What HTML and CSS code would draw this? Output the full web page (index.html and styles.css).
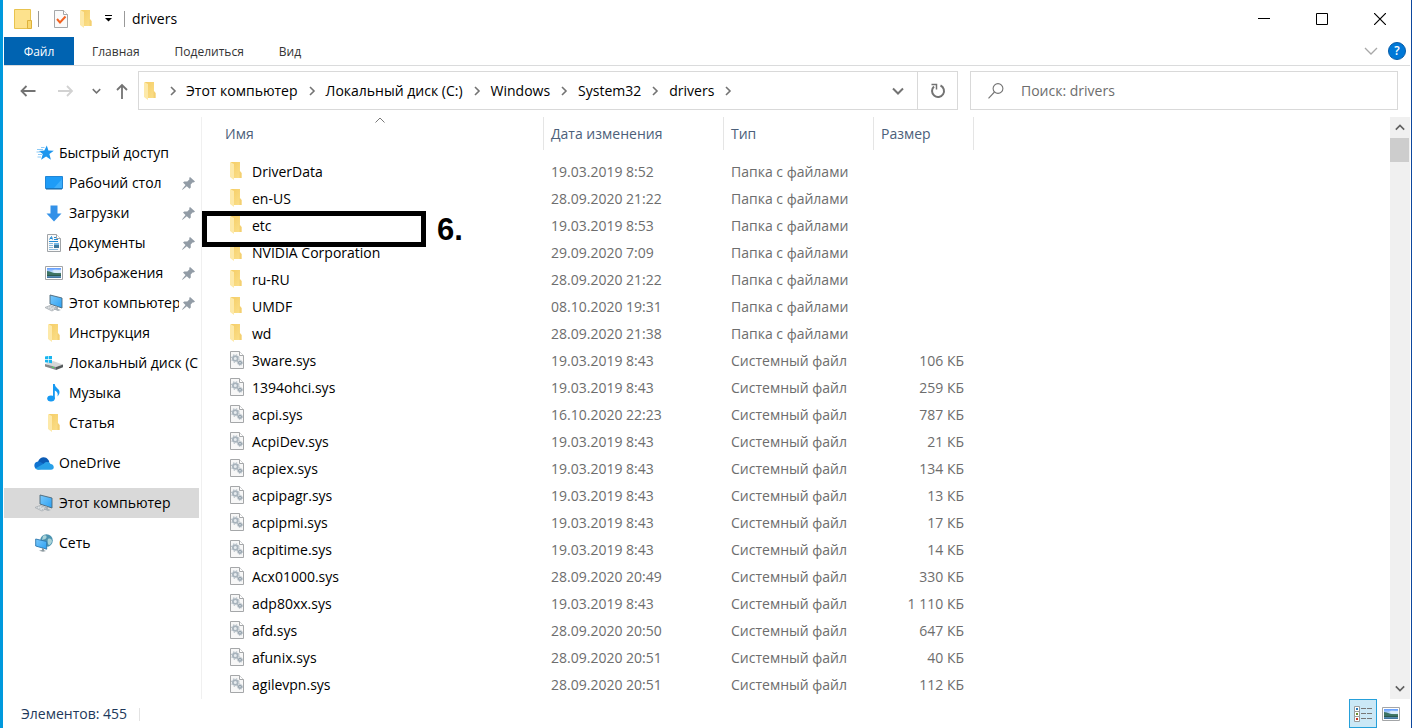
FILE: index.html
```html
<!DOCTYPE html>
<html lang="ru">
<head>
<meta charset="utf-8">
<title>drivers</title>
<link rel="stylesheet" href="styles.css">
</head>
<body>
<svg class="sprite" aria-hidden="true">
  <defs>
    <linearGradient id="gold" x1="0" x2="1" y1="0" y2="1"><stop offset="0" stop-color="#f5cd66"/><stop offset="1" stop-color="#fbe08c"/></linearGradient>
    <linearGradient id="sky" x1="0" x2="0" y1="0" y2="1"><stop offset="0" stop-color="#5f9bff"/><stop offset="0.5" stop-color="#d3ecfb"/><stop offset="0.55" stop-color="#4f7d6a"/><stop offset="0.75" stop-color="#2c5a50"/><stop offset="0.8" stop-color="#5d93b4"/><stop offset="1" stop-color="#3a6d9c"/></linearGradient>
    <linearGradient id="screen" x1="0" x2="1" y1="0" y2="1"><stop offset="0" stop-color="#7cc9fb"/><stop offset="1" stop-color="#2aa0f3"/></linearGradient>
  </defs>
  <symbol id="i-folder" viewBox="0 0 12 18">
    <path d="M1 0h9v9l1.500 2v5H3z" fill="url(#gold)"/>
    <path d="M0 0l4 2v16l-4-3z" fill="#fde9a9"/>
    <path d="M9.500 9l2 2v5h-2z" fill="#f3cf72"/>
  </symbol>
  <symbol id="i-sys" viewBox="0 0 14 18">
    <path d="M.5.5h9l4 4v13H.5z" fill="#f7f7f7" stroke="#a5a7a9"/>
    <path d="M9.500.5v4h4" fill="#fff" stroke="#a5a7a9"/>
    <circle cx="5.300" cy="7.500" r="2.400" fill="#e6ebef" stroke="#a8b3bc" stroke-width="1.800"/>
    <circle cx="5.300" cy="7.500" r="3.800" fill="none" stroke="#b4bec6" stroke-width="1.100" stroke-dasharray="1.500 1.500"/>
    <circle cx="10" cy="11.800" r="1.400" fill="#e6ebef" stroke="#96a3ae" stroke-width="1.400"/>
    <circle cx="10" cy="11.800" r="2.500" fill="none" stroke="#a3afb8" stroke-dasharray="1 1"/>
  </symbol>
  <symbol id="i-star" viewBox="0 0 18 16" preserveAspectRatio="xMaxYMid">
    <path d="M10.800.5l1.600 5 5.400.2-4.400 3.300 1.500 5.700-4.800-3.200-5 3.300 1.700-5.700-4-3.200 5.500-.4z" fill="#1d96ee"/>
    <path d="M5 2.500h3.500M1 4.500h6M.5 7h4M2 9.500h4M1.500 12h3.500" stroke="#8ccaf6"/>
  </symbol>
  <symbol id="i-desktop" viewBox="0 0 18 14">
    <path d="M.5.5h17v12H.5z" fill="#1e9cf7" stroke="#2186d6"/>
    <path d="M9 12L17 3v9z" fill="#3daefb"/><path d="M1 13h16" stroke="#14639f"/>
  </symbol>
  <symbol id="i-down" viewBox="0 0 16 17"><path d="M4.500.5h7v8h4L8 16.500.5 8.500h4z" fill="#3391e8"/></symbol>
  <symbol id="i-doc" viewBox="0 0 14 18">
    <path d="M.5.5h9l4 4v13H.5z" fill="#fafafa" stroke="#9fa3a7"/><path d="M9.500.5v4h4" fill="#fff" stroke="#9fa3a7"/>
    <path d="M2.500 5.500l2-3 1 3M3 4.500h2M7 3.500h2M7 5.500h4M2 7.500h9" fill="none" stroke="#228ad2"/>
    <path d="M2 9.500h4M2 11.500h4M2 13.500h4M2 15.500h9" stroke="#87b9dc"/><path d="M7 9h5v5H7z" fill="#3e789c"/><path d="M7 9h5v2H7z" fill="#74b7e4"/>
  </symbol>
  <symbol id="i-pic" viewBox="0 0 18 14">
    <path d="M.5.5h17v13H.5z" fill="#fff" stroke="#a3a5a7"/><path d="M2 2h14v10H2z" fill="url(#sky)"/>
    <path d="M2 5c4 0 6 3 14 3v1H2z" fill="#3c7465"/><path d="M7 5c2-2 5-1 9-1v2c-3 1-6 1-9-1z" fill="#eff8fc" opacity=".7"/>
  </symbol>
  <symbol id="i-pc" viewBox="0 0 20 18">
    <path d="M6 1l12 3v10L6 10z" fill="url(#screen)" stroke="#4b6678" stroke-width=".9"/>
    <path d="M11 12v2l-2 1 5 2 3-1-3-1v-2z" fill="#a8b1b7"/>
    <path d="M1 13.500l5-2 7 2.500-5 3z" fill="#e3e6e8" stroke="#a5abb0" stroke-width=".8"/>
    <path d="M3 13.700l6 2M5 12.700l6 2" stroke="#a5abb0" stroke-width=".8" stroke-dasharray="1 .8"/>
  </symbol>
  <symbol id="i-disk" viewBox="0 0 18 14">
    <path d="M0 8l8-3 10 3.500-7 2.500z" fill="#d5d7d8"/><path d="M0 8l11 3v3L0 10.500z" fill="#85898c"/><path d="M11 11l7-2.500v2.700L11 14z" fill="#55595b"/><path d="M7 11l2 .7" stroke="#4ae15b"/>
    <path d="M0 .5l3-.4v3H0zM3.600 0L7-.4v3.500H3.600zM0 3.700h3v3L0 6.300zM3.600 3.700H7v3.500l-3.400-.4z" fill="#18b5ef"/>
  </symbol>
  <symbol id="i-note" viewBox="0 0 14 18">
    <ellipse cx="4" cy="14.500" rx="3.800" ry="3" fill="#1699f2"/><path d="M6 0h1.800c.2 4 4.700 4.500 4.700 8 0 2-.9 3.300-2 4.500.8-3.300-.2-5-2.700-6V15H6z" fill="#1699f2"/>
  </symbol>
  <symbol id="i-cloud" viewBox="0 0 20 13">
    <path d="M4 5C5 .5 11-1.500 14 2.500c1 1.200 1.200 2 1.300 3L8 8z" fill="#0b5bb5"/>
    <path d="M4.200 12.500C-.8 12-1 5 4 4.600c2 0 3 .8 5 2L14 11z" fill="#1073d0"/>
    <path d="M1.300 11.500L10 6.500c2-2.500 6-1.500 6.500.5 4 .3 4.500 5.500.5 5.700H4c-1.300 0-2-.5-2.700-1.200z" fill="#28a0e8"/>
  </symbol>
  <symbol id="i-net" viewBox="0 0 18 18">
    <circle cx="11.500" cy="6.500" r="6.300" fill="#4c93b0"/><path d="M8 2c2-1.500 4-.5 3.500 1.500S9 5 7 6zM13 5c2-1 4 0 4 2s-2 4-3 4-2-4-1-6z" fill="#a9d3d8"/>
    <path d="M.7 5l11 2.500v7.700L.7 12z" fill="url(#screen)" stroke="#2c77ae" stroke-width=".9"/><path d="M7 14v2l-3 .7 4 1.100 3-.9-2-.7V14.500z" fill="#8c999f"/>
  </symbol>
  <symbol id="i-pin" viewBox="0 0 13 13"><path d="M8 0l5 4.500-1.300.9-.8-.2-2.200 2.300.1 3-1.300 1.200L4.800 9.200.6 12.800 0 12.500l3.500-4.600L1 5.600l1.300-1.200 3 .2 2.200-2.400L7.200 1z" fill="#929ca6"/></symbol>
  <symbol id="i-chev" viewBox="0 0 10 10"><path d="M3 1l4 4-4 4" fill="none" stroke="#737373" stroke-width="1.600"/></symbol>
  <symbol id="i-drop" viewBox="0 0 12 8"><path d="M1 1.500l5 5 5-5" fill="none" stroke="currentColor" stroke-width="2"/></symbol>
</svg>

<div class="window">
  <header class="titlebar">
    <svg class="app-icon" width="18" height="20" viewBox="0 0 18 20"><path d="M.5.5h16v19H.5z" fill="#fde28d" stroke="#e8c34f"/><path d="M13.500 19.500v-8h4v8z" fill="#f9d871" stroke="#ddb13c"/></svg>
    <span class="bar"></span>
    <button class="quick" aria-label="Свойства"><svg width="14" height="18" viewBox="0 0 14 18"><path d="M.5.5h9l4 4v13H.5z" fill="#fafafa" stroke="#a5a7a9"/><path d="M9.500.5v4h4" fill="#fff" stroke="#a5a7a9"/><path d="M3 9l3 3.500L11.500 6.500" fill="none" stroke="#f26322" stroke-width="2"/></svg></button>
    <button class="quick" aria-label="Новая папка"><svg width="12" height="18"><use href="#i-folder"/></svg></button>
    <button class="quick customize" aria-label="Настройка панели"><svg width="7" height="7" viewBox="0 0 7 7"><path d="M0 .5h7" stroke="#000"/><path d="M0 3h7L3.500 6.500z"/></svg></button>
    <span class="bar"></span>
    <h1 class="title">drivers</h1>
    <button class="win-btn" aria-label="Свернуть"><svg width="12" height="12"><path d="M0 5.500h12" stroke="#000"/></svg></button>
    <button class="win-btn" aria-label="Развернуть"><svg width="12" height="12"><path d="M.5.5h11v11H.5z" fill="none" stroke="#000"/></svg></button>
    <button class="win-btn" aria-label="Закрыть"><svg width="12" height="12"><path d="M0 0l12 12M12 0L0 12" stroke="#000" stroke-width="1.200"/></svg></button>
  </header>

  <nav class="ribbon">
    <button class="tab tab-file">Файл</button>
    <button class="tab">Главная</button>
    <button class="tab">Поделиться</button>
    <button class="tab">Вид</button>
    <button class="expand" aria-label="Развернуть ленту"><svg width="14" height="8" viewBox="0 0 14 8"><path d="M1 1l6 6 6-6" fill="none" stroke="#a8a8a8" stroke-width="1.300"/></svg></button>
    <button class="help" aria-label="Справка">?</button>
  </nav>

  <div class="navbar">
    <div class="arrows">
      <button aria-label="Назад"><svg width="16" height="12" viewBox="0 0 16 12"><path d="M15.500 6H2M6.500 1L1.500 6l5 5" fill="none" stroke="#737373" stroke-width="1.800"/></svg></button>
      <button aria-label="Вперёд"><svg width="16" height="12" viewBox="0 0 16 12"><path d="M0 6h14M9 1l5 5-5 5" fill="none" stroke="#d2d2d2" stroke-width="1.800"/></svg></button>
      <button class="recent" aria-label="Последние расположения"><svg width="9" height="6"><use href="#i-drop"/></svg></button>
      <button class="up" aria-label="Вверх"><svg width="12" height="16" viewBox="0 0 12 16"><path d="M6 16V2M1 7l5-5 5 5" fill="none" stroke="#737373" stroke-width="1.800"/></svg></button>
    </div>
    <div class="address">
      <svg width="12" height="18"><use href="#i-folder"/></svg>
      <svg class="sep" width="10" height="10"><use href="#i-chev"/></svg><button>Этот компьютер</button>
      <svg class="sep" width="10" height="10"><use href="#i-chev"/></svg><button>Локальный диск (C:)</button>
      <svg class="sep" width="10" height="10"><use href="#i-chev"/></svg><button>Windows</button>
      <svg class="sep" width="10" height="10"><use href="#i-chev"/></svg><button>System32</button>
      <svg class="sep" width="10" height="10"><use href="#i-chev"/></svg><button>drivers</button>
      <svg class="sep" width="10" height="10"><use href="#i-chev"/></svg>
      <button class="history" aria-label="Журнал адресов"><svg width="12" height="8"><use href="#i-drop"/></svg></button>
      <button class="refresh" aria-label="Обновить"><svg width="16" height="16" viewBox="0 0 16 16"><path d="M10.500 2.500a6 6 0 1 1-6.500 1" fill="none" stroke="#737373" stroke-width="2"/><path d="M1.500 1.500h5v5" fill="none" stroke="#737373" stroke-width="1.500"/></svg></button>
    </div>
    <label class="search">
      <svg width="16" height="16" viewBox="0 0 16 16"><circle cx="10" cy="5.500" r="4.900" fill="none" stroke="#737373" stroke-width="1.100"/><path d="M6.500 9L.5 15.300" stroke="#737373" stroke-width="1.100"/></svg>
      <input type="search" placeholder="Поиск: drivers" aria-label="Поиск: drivers">
    </label>
  </div>

  <main class="content">
    <nav class="sidebar">
      <a class="root" href="#"><svg class="ico" width="18" height="16"><use href="#i-star"/></svg><span>Быстрый доступ</span></a>
      <a href="#"><svg class="ico" width="18" height="14"><use href="#i-desktop"/></svg><span>Рабочий стол</span><svg class="pin" width="13" height="13"><use href="#i-pin"/></svg></a>
      <a href="#"><svg class="ico" width="18" height="17"><use href="#i-down"/></svg><span>Загрузки</span><svg class="pin" width="13" height="13"><use href="#i-pin"/></svg></a>
      <a href="#"><svg class="ico" width="18" height="18"><use href="#i-doc"/></svg><span>Документы</span><svg class="pin" width="13" height="13"><use href="#i-pin"/></svg></a>
      <a href="#"><svg class="ico" width="18" height="14"><use href="#i-pic"/></svg><span>Изображения</span><svg class="pin" width="13" height="13"><use href="#i-pin"/></svg></a>
      <a href="#"><svg class="ico" width="20" height="18"><use href="#i-pc"/></svg><span>Этот компьютер</span><svg class="pin" width="13" height="13"><use href="#i-pin"/></svg></a>
      <a href="#"><svg class="ico" width="16" height="18"><use href="#i-folder"/></svg><span>Инструкция</span></a>
      <a href="#"><svg class="ico" width="18" height="14"><use href="#i-disk"/></svg><span>Локальный диск (C:)</span></a>
      <a href="#"><svg class="ico" width="18" height="18"><use href="#i-note"/></svg><span>Музыка</span></a>
      <a href="#"><svg class="ico" width="16" height="18"><use href="#i-folder"/></svg><span>Статья</span></a>
      <a class="root group" href="#"><svg class="ico" width="20" height="13"><use href="#i-cloud"/></svg><span>OneDrive</span></a>
      <a class="root group selected" href="#"><svg class="ico" width="20" height="18"><use href="#i-pc"/></svg><span>Этот компьютер</span></a>
      <a class="root group" href="#"><svg class="ico" width="18" height="18"><use href="#i-net"/></svg><span>Сеть</span></a>
    </nav>

    <section class="files">
      <table>
        <colgroup><col class="c-name"><col class="c-date"><col class="c-type"><col class="c-size"><col></colgroup>
        <thead><tr><th class="name">Имя<svg class="sort" width="10" height="6" viewBox="0 0 10 6"><path d="M.5 5.500l4.500-4.500 4.500 4.500" fill="none" stroke="#777"/></svg></th><th>Дата изменения</th><th>Тип</th><th>Размер</th><td></td></tr></thead>
        <tbody>
          <tr><td class="name"><svg width="14" height="18"><use href="#i-folder" width="12"/></svg>DriverData</td><td>19.03.2019 8:52</td><td>Папка с файлами</td><td></td></tr>
          <tr><td class="name"><svg width="14" height="18"><use href="#i-folder" width="12"/></svg>en-US</td><td>28.09.2020 21:22</td><td>Папка с файлами</td><td></td></tr>
          <tr><td class="name"><svg width="14" height="18"><use href="#i-folder" width="12"/></svg>etc</td><td>19.03.2019 8:53</td><td>Папка с файлами</td><td></td></tr>
          <tr><td class="name"><svg width="14" height="18"><use href="#i-folder" width="12"/></svg>NVIDIA Corporation</td><td>29.09.2020 7:09</td><td>Папка с файлами</td><td></td></tr>
          <tr><td class="name"><svg width="14" height="18"><use href="#i-folder" width="12"/></svg>ru-RU</td><td>28.09.2020 21:22</td><td>Папка с файлами</td><td></td></tr>
          <tr><td class="name"><svg width="14" height="18"><use href="#i-folder" width="12"/></svg>UMDF</td><td>08.10.2020 19:31</td><td>Папка с файлами</td><td></td></tr>
          <tr><td class="name"><svg width="14" height="18"><use href="#i-folder" width="12"/></svg>wd</td><td>28.09.2020 21:38</td><td>Папка с файлами</td><td></td></tr>
          <tr><td class="name"><svg width="14" height="18"><use href="#i-sys"/></svg>3ware.sys</td><td>19.03.2019 8:43</td><td>Системный файл</td><td class="size">106 КБ</td></tr>
          <tr><td class="name"><svg width="14" height="18"><use href="#i-sys"/></svg>1394ohci.sys</td><td>19.03.2019 8:43</td><td>Системный файл</td><td class="size">259 КБ</td></tr>
          <tr><td class="name"><svg width="14" height="18"><use href="#i-sys"/></svg>acpi.sys</td><td>16.10.2020 22:23</td><td>Системный файл</td><td class="size">787 КБ</td></tr>
          <tr><td class="name"><svg width="14" height="18"><use href="#i-sys"/></svg>AcpiDev.sys</td><td>19.03.2019 8:43</td><td>Системный файл</td><td class="size">21 КБ</td></tr>
          <tr><td class="name"><svg width="14" height="18"><use href="#i-sys"/></svg>acpiex.sys</td><td>19.03.2019 8:43</td><td>Системный файл</td><td class="size">134 КБ</td></tr>
          <tr><td class="name"><svg width="14" height="18"><use href="#i-sys"/></svg>acpipagr.sys</td><td>19.03.2019 8:43</td><td>Системный файл</td><td class="size">13 КБ</td></tr>
          <tr><td class="name"><svg width="14" height="18"><use href="#i-sys"/></svg>acpipmi.sys</td><td>19.03.2019 8:43</td><td>Системный файл</td><td class="size">17 КБ</td></tr>
          <tr><td class="name"><svg width="14" height="18"><use href="#i-sys"/></svg>acpitime.sys</td><td>19.03.2019 8:43</td><td>Системный файл</td><td class="size">14 КБ</td></tr>
          <tr><td class="name"><svg width="14" height="18"><use href="#i-sys"/></svg>Acx01000.sys</td><td>28.09.2020 20:49</td><td>Системный файл</td><td class="size">330 КБ</td></tr>
          <tr><td class="name"><svg width="14" height="18"><use href="#i-sys"/></svg>adp80xx.sys</td><td>19.03.2019 8:43</td><td>Системный файл</td><td class="size">1 110 КБ</td></tr>
          <tr><td class="name"><svg width="14" height="18"><use href="#i-sys"/></svg>afd.sys</td><td>28.09.2020 20:50</td><td>Системный файл</td><td class="size">647 КБ</td></tr>
          <tr><td class="name"><svg width="14" height="18"><use href="#i-sys"/></svg>afunix.sys</td><td>28.09.2020 20:51</td><td>Системный файл</td><td class="size">40 КБ</td></tr>
          <tr><td class="name"><svg width="14" height="18"><use href="#i-sys"/></svg>agilevpn.sys</td><td>28.09.2020 20:51</td><td>Системный файл</td><td class="size">112 КБ</td></tr>
        </tbody>
      </table>
      <div class="callout"></div>
      <strong class="callout-label">6.</strong>
    </section>

    <div class="scrollbar">
      <button aria-label="Прокрутить вверх"><svg class="flip" width="10" height="7"><use href="#i-drop"/></svg></button>
      <div class="thumb"></div>
      <button class="scroll-down" aria-label="Прокрутить вниз"><svg width="10" height="7"><use href="#i-drop"/></svg></button>
    </div>
  </main>

  <footer class="status">
    <span class="count">Элементов: 455</span>
    <button class="view active" aria-label="Таблица"><svg width="18" height="16" viewBox="0 0 18 16"><path d="M.5.5h5v5h-5zM.5 5.500h5v5h-5zM.5 10.500h5v5h-5z" fill="#fff" stroke="#9b9b9b"/><path d="M2 2h2v2H2z" fill="#2677b8"/><path d="M2 7h2v2H2z" fill="#6d8d2c"/><path d="M2 12h2v2H2z" fill="#c8321f"/><path d="M7 2.500h5M13 2.500h5M7 7.500h5M13 7.500h5M7 12.500h5M13 12.500h5" stroke="#777"/></svg></button>
    <button class="view" aria-label="Крупные значки"><svg width="18" height="14"><use href="#i-pic"/></svg></button>
  </footer>
</div>
</body>
</html>
```

FILE: styles.css
```css
* { box-sizing: border-box; }

body {
  margin: 0;
  background: #fff;
  color: #000;
  font: 14px/20px "Open Sans", "Noto Sans", sans-serif;
}

button {
  display: flex;
  align-items: center;
  justify-content: center;
  margin: 0;
  padding: 0;
  border: 0;
  background: none;
  color: inherit;
  font: inherit;
}

svg { flex: none; }
.sprite { position: absolute; width: 0; height: 0; }

.window {
  display: flex;
  flex-direction: column;
  min-height: 100vh;
  border-left: 3px solid #0099dd;
  border-right: 1px solid #0d479d;
  padding: 0 1px;
}

.titlebar { display: flex; align-items: center; height: 37px; padding: 0 1px 0 10px; }
.bar { width: 1px; height: 16px; margin: 0 7px 0 6px; background: #999; }
.quick { width: 25px; height: 24px; }
.quick:first-of-type { margin-left: 2px; }
.quick.customize { width: 20px; }
.titlebar .title { flex: 1; margin: 0; font-size: 14px; font-weight: 400; }
.win-btn { width: 58px; height: 36px; }

.ribbon { display: flex; align-items: stretch; gap: 1px; height: 29px; border-bottom: 1px solid #dadbdc; font-size: 12px; color: #333; }
.tab { padding: 1px 17px 0; }
.tab-file { width: 70px; background: #0063b1; color: #fff; }
.expand { width: 24px; margin-left: auto; }
.help {
  align-self: center;
  width: 18px;
  height: 18px;
  margin: 0 4px 0 4px;
  border: 1px solid #075ca8;
  border-radius: 50%;
  background: #0078d7;
  color: #fff;
  font-weight: 600;
}

.navbar { display: flex; align-items: flex-start; height: 51px; padding: 5px 12px 0 0; }
.arrows { display: flex; width: 134px; padding-left: 5px; }
.arrows button { width: 38px; height: 40px; color: #737373; }
.arrows .recent { width: 23px; }
.arrows .up { width: 27px; }

.address { display: flex; flex: 813 1 0; align-items: center; height: 39px; padding-left: 5px; border: 1px solid #d9d9d9; }
.sep { margin: 0 9px; }
.address svg:first-child + .sep { margin: 0 8px 0 12px; }
.history { width: 38px; height: 37px; margin-left: auto; color: #737373; }
.refresh { width: 40px; height: 37px; border-left: 1px solid #d9d9d9; }
.search { display: flex; flex: 409 1 0; align-items: center; height: 39px; margin-left: 12px; padding-left: 17px; border: 1px solid #d9d9d9; }
.search input { flex: 1; min-width: 0; margin-left: 17px; padding: 0; border: 0; outline: 0; background: none; font: inherit; }
.search input::placeholder { color: #6d6d6d; opacity: 1; }

.content { display: flex; flex: 1; }
.sidebar { width: 195px; padding-top: 21px; }
.sidebar a { display: flex; align-items: center; height: 30px; padding-left: 40px; color: #000; text-decoration: none; }
.sidebar .root { padding-left: 30px; }
.sidebar .group { margin-top: 10px; }
.sidebar .selected { background: #d9d9d9; }
.sidebar span { flex: 1; min-width: 0; overflow: hidden; white-space: nowrap; }
.ico { width: 20px; margin-right: 5px; }
.pin { margin: 0 4px 0 3px; }

.files { position: relative; flex: 1; min-width: 0; margin-left: 2px; border-left: 1px solid #f0f0f0; }
table { width: 100%; table-layout: fixed; border-collapse: separate; border-spacing: 0; color: #6d6d6d; }
.c-name { width: 342px; }
.c-date { width: 180px; }
.c-type { width: 150px; }
.c-size { width: 100px; }
th { height: 33px; padding: 0 7px; border-right: 1px solid #e5e5e5; color: #4c607a; font-weight: 400; text-align: left; }
th.name { position: relative; padding-left: 23px; }
.sort { position: absolute; top: 0; left: 50%; margin-left: 2px; }
tbody::before { content: ""; display: block; height: 8px; }
tbody td { height: 27px; padding: 0 7px; white-space: nowrap; }
tbody .name { padding-left: 28px; color: #000; }
.name svg:not(.sort) { margin-right: 8px; vertical-align: top; }
tbody .size { padding-right: 10px; text-align: right; }

.callout { position: absolute; top: 94px; left: 0; width: 224px; height: 36px; border: 5px solid #000; }
.callout-label { position: absolute; top: 95px; left: 235px; font: 700 31px/36px "Liberation Sans", Arial, sans-serif; color: #000; }

.scrollbar { display: flex; flex-direction: column; width: 20px; background: #f0f0f0; color: #606060; }
.scrollbar button { height: 21px; }
.scrollbar .scroll-down { margin-top: auto; }
.flip { transform: rotate(180deg); }
.thumb { width: 19px; height: 24px; background: #cdcdcd; }

.status { display: flex; align-items: center; height: 29px; padding: 0 5px 0 17px; color: #1e395b; }
.count { margin-right: auto; }
.count::after { content: ""; display: inline-block; width: 1px; height: 13px; margin-left: 12px; background: #e3e3e3; vertical-align: middle; }
.view { width: 28px; height: 29px; }
.view.active { border: 1px solid #26a0da; background: #cbe8f6; }
```
